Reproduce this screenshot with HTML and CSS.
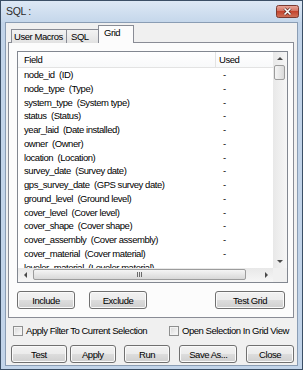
FILE: index.html
```html
<!DOCTYPE html>
<html lang="en">

<head>
    <meta charset="UTF-8">
    <title>SQL :</title>
    <link rel="stylesheet" href="styles.css">
</head>

<body>
    <div class="window">
        <!-- title bar -->
        <div class="titlebar">
            <span class="title">SQL :</span>
            <svg class="close" width="23" height="13" viewBox="0 0 23 13">
                <defs>
                    <linearGradient id="red" x1="0" y1="0" x2="0" y2="1">
                        <stop offset="0" stop-color="#e9a99c" />
                        <stop offset="0.5" stop-color="#d2705f" />
                        <stop offset="0.5" stop-color="#c4452f" />
                        <stop offset="1" stop-color="#d0735a" />
                    </linearGradient>
                </defs>
                <rect x="0.5" y="0.5" width="22" height="12" rx="2" fill="url(#red)" stroke="#7a3a31" />
                <path d="M8.5 3.5 L14.5 9.5 M14.5 3.5 L8.5 9.5" stroke="#5b2a23" stroke-width="3" />
                <path d="M8.5 3.5 L14.5 9.5 M14.5 3.5 L8.5 9.5" stroke="#fff" stroke-width="1.6" />
            </svg>
        </div>

        <div class="client">
            <!-- tabs -->
            <div class="tabs">
                <div class="tab tab-macros">User Macros</div>
                <div class="tab tab-sql">SQL</div>
                <div class="tab tab-grid active">Grid</div>
            </div>

            <div class="panel">
                <div class="list">
                    <div class="list-body">
                        <div class="list-head">
                            <div class="f">Field</div>
                            <div class="u">Used</div>
                        </div>
                        <div class="row"><div class="f">node_id  (ID)</div><div class="u">-</div></div>
                        <div class="row"><div class="f">node_type  (Type)</div><div class="u">-</div></div>
                        <div class="row"><div class="f">system_type  (System type)</div><div class="u">-</div></div>
                        <div class="row"><div class="f">status  (Status)</div><div class="u">-</div></div>
                        <div class="row"><div class="f">year_laid  (Date installed)</div><div class="u">-</div></div>
                        <div class="row"><div class="f">owner  (Owner)</div><div class="u">-</div></div>
                        <div class="row"><div class="f">location  (Location)</div><div class="u">-</div></div>
                        <div class="row"><div class="f">survey_date  (Survey date)</div><div class="u">-</div></div>
                        <div class="row"><div class="f">gps_survey_date  (GPS survey date)</div><div class="u">-</div></div>
                        <div class="row"><div class="f">ground_level  (Ground level)</div><div class="u">-</div></div>
                        <div class="row"><div class="f">cover_level  (Cover level)</div><div class="u">-</div></div>
                        <div class="row"><div class="f">cover_shape  (Cover shape)</div><div class="u">-</div></div>
                        <div class="row"><div class="f">cover_assembly  (Cover assembly)</div><div class="u">-</div></div>
                        <div class="row"><div class="f">cover_material  (Cover material)</div><div class="u">-</div></div>
                        <div class="row"><div class="f">leveler_material  (Leveler material)</div><div class="u">-</div></div>
                    </div>

                    <!-- vertical scrollbar -->
                    <div class="vscroll">
                        <div class="sb-btn"><span class="arr up"></span></div>
                        <div class="vthumb"></div>
                        <div class="sb-track"></div>
                        <div class="sb-btn"><span class="arr down"></span></div>
                    </div>

                    <!-- horizontal scrollbar -->
                    <div class="hscroll">
                        <div class="sb-btn hbtn"><span class="arr left"></span></div>
                        <div class="hthumb"><span class="grip"></span></div>
                        <div class="sb-track"></div>
                        <div class="sb-btn hbtn"><span class="arr right"></span></div>
                    </div>
                    <div class="corner"></div>
                </div>

                <div class="grid-buttons">
                    <button class="btn btn-include">Include</button>
                    <button class="btn btn-exclude">Exclude</button>
                    <button class="btn btn-testgrid">Test Grid</button>
                </div>
            </div>

            <!-- options -->
            <div class="checks">
                <label class="check"><span class="cb"></span>Apply Filter To Current Selection</label>
                <label class="check check-right"><span class="cb"></span>Open Selection In Grid View</label>
            </div>

            <div class="buttons">
                <button class="btn btn-test">Test</button>
                <button class="btn btn-apply">Apply</button>
                <button class="btn btn-run">Run</button>
                <button class="btn btn-save">Save As...</button>
                <button class="btn btn-close">Close</button>
            </div>
        </div>
    </div>
</body>

</html>
```

FILE: styles.css
```css
body {
    margin: 0;
    font-family: 'Liberation Sans', Arial, sans-serif;
    font-size: 9.5px;
    letter-spacing: -0.45px;
    color: #000;
    background-color: #fff;
}

.window {
    width: 303px;
    height: 370px;
    box-sizing: border-box;
    border: 1px solid #3b4f66;
    background-color: #c2d4e9;
    padding: 0 4px 3px 4px;
    display: flex;
    flex-direction: column;
}

/* title bar */
.titlebar {
    height: 20px;
    margin: 0 -4px;
    padding: 0 3px 1px 5px;
    display: flex;
    align-items: center;
    justify-content: space-between;
    background: linear-gradient(#dde8f5, #c5d7eb);
}

.title {
    font-size: 10.5px;
    letter-spacing: -0.3px;
    color: #2b2b2b;
}

.close {
    display: block;
}

.client {
    flex: 1;
    background-color: #f0f0f0;
    border: 1px solid #8a9db4;
    padding: 2px 3px 0 2px;
    display: flex;
    flex-direction: column;
}

/* tabs */
.tabs {
    display: flex;
    align-items: flex-end;
    height: 18px;
    padding-left: 3px;
    margin-bottom: -1px;
    position: relative;
    z-index: 1;
}

.tab {
    height: 14px;
    box-sizing: border-box;
    border: 1px solid #898c95;
    border-bottom: none;
    background: linear-gradient(#f3f3f3, #e2e2e2);
    line-height: 13px;
    color: #000;
}

.tab-macros {
    width: 56px;
    padding-left: 2px;
}

.tab-sql {
    width: 33px;
    margin-left: -1px;
    padding-left: 4px;
}

.tab-grid {
    width: 36px;
    margin-left: -1px;
    padding-left: 5px;
}

.tab.active {
    height: 18px;
    background: #fcfcfc;
    line-height: 13px;
}

.panel {
    height: 276px;
    box-sizing: border-box;
    border: 1px solid #898c95;
    background-color: #fcfcfc;
    padding: 8px 6px 0 8px;
}

/* list view */
.list {
    width: 271px;
    height: 232px;
    box-sizing: border-box;
    border: 1px solid #828790;
    background-color: #fff;
    display: grid;
    grid-template-columns: 1fr 14px;
    grid-template-rows: 1fr 14px;
}

.list-body {
    overflow: hidden;
}

.list-head {
    display: flex;
    height: 15px;
    line-height: 15px;
    border-bottom: 1px solid #e3e3e3;
    background: linear-gradient(#fff, #f8f9fa);
}

.row {
    display: flex;
    height: 13.77px;
    line-height: 13.77px;
    white-space: pre;
}

.f {
    width: 197px;
    flex-shrink: 0;
    padding-left: 6px;
    box-sizing: border-box;
}

.u {
    padding-left: 8px;
}

.list-head .u {
    border-left: 1px solid #e3e3e3;
    padding-left: 3px;
}

/* scrollbars */
.vscroll {
    display: flex;
    flex-direction: column;
    background: linear-gradient(90deg, #e8e8e8, #f6f6f6);
}

.hscroll {
    display: flex;
    background: linear-gradient(#e8e8e8, #f6f6f6);
}

.sb-btn {
    height: 13px;
    display: flex;
    align-items: center;
    justify-content: center;
}

.hbtn {
    width: 14px;
    height: auto;
}

.sb-track {
    flex: 1;
}

.vthumb {
    height: 13px;
    margin: 0 2px 0 1px;
    border: 1px solid #9c9c9c;
    border-radius: 2px;
    background: linear-gradient(90deg, #f5f5f5, #dadada);
}

.hthumb {
    width: 211px;
    margin: 1px 0 2px 1px;
    border: 1px solid #9c9c9c;
    border-radius: 2px;
    background: linear-gradient(#f5f5f5, #d8d8d8);
    display: flex;
    align-items: center;
    justify-content: center;
}

.grip {
    width: 5px;
    height: 5px;
    background: repeating-linear-gradient(90deg, #6a6a6a 0 1px, transparent 1px 2px);
}

.corner {
    background-color: #f0f0f0;
}

.arr {
    width: 0;
    height: 0;
    border: 3px solid transparent;
}

.arr.up {
    border-top: none;
    border-bottom: 3px solid #4a4a4a;
}

.arr.down {
    border-bottom: none;
    border-top: 3px solid #4a4a4a;
}

.arr.left {
    border-left: none;
    border-right: 3px solid #4a4a4a;
}

.arr.right {
    border-right: none;
    border-left: 3px solid #4a4a4a;
}

/* buttons */
.btn {
    height: 18px;
    box-sizing: border-box;
    border: 1px solid #707070;
    border-radius: 3px;
    padding: 0;
    background: linear-gradient(#f2f2f2 0%, #ebebeb 50%, #dddddd 50%, #cfcfcf 100%);
    box-shadow: inset 0 0 0 1px #fafafa;
    font-family: inherit;
    font-size: inherit;
    letter-spacing: inherit;
    color: #000;
}

.grid-buttons {
    display: flex;
    margin-top: 8px;
    padding-right: 2px;
}

.btn-include,
.btn-exclude {
    width: 58px;
}

.btn-exclude {
    margin-left: 14px;
}

.btn-testgrid {
    width: 70px;
    margin-left: auto;
}

.checks {
    display: flex;
    align-items: center;
    height: 13px;
    margin-top: 6px;
    padding: 0 5px;
}

.check {
    display: flex;
    align-items: center;
    color: #000;
}

.check-right {
    margin-left: auto;
}

.cb {
    width: 10px;
    height: 10px;
    box-sizing: border-box;
    border: 1px solid #8e8f8f;
    background: linear-gradient(135deg, #d8d8d8, #fbfbfb);
    box-shadow: inset 0 0 0 1px #f3f3f3;
    margin-right: 3px;
}

.buttons {
    display: flex;
    margin-top: 8px;
    padding-left: 3px;
}

.btn-test {
    width: 56px;
}

.btn-apply {
    width: 46px;
    margin-left: 3px;
}

.btn-run {
    width: 47px;
    margin-left: 8px;
}

.btn-save {
    width: 58px;
    margin-left: 9px;
}

.btn-close {
    width: 48px;
    margin-left: 9px;
}
```
